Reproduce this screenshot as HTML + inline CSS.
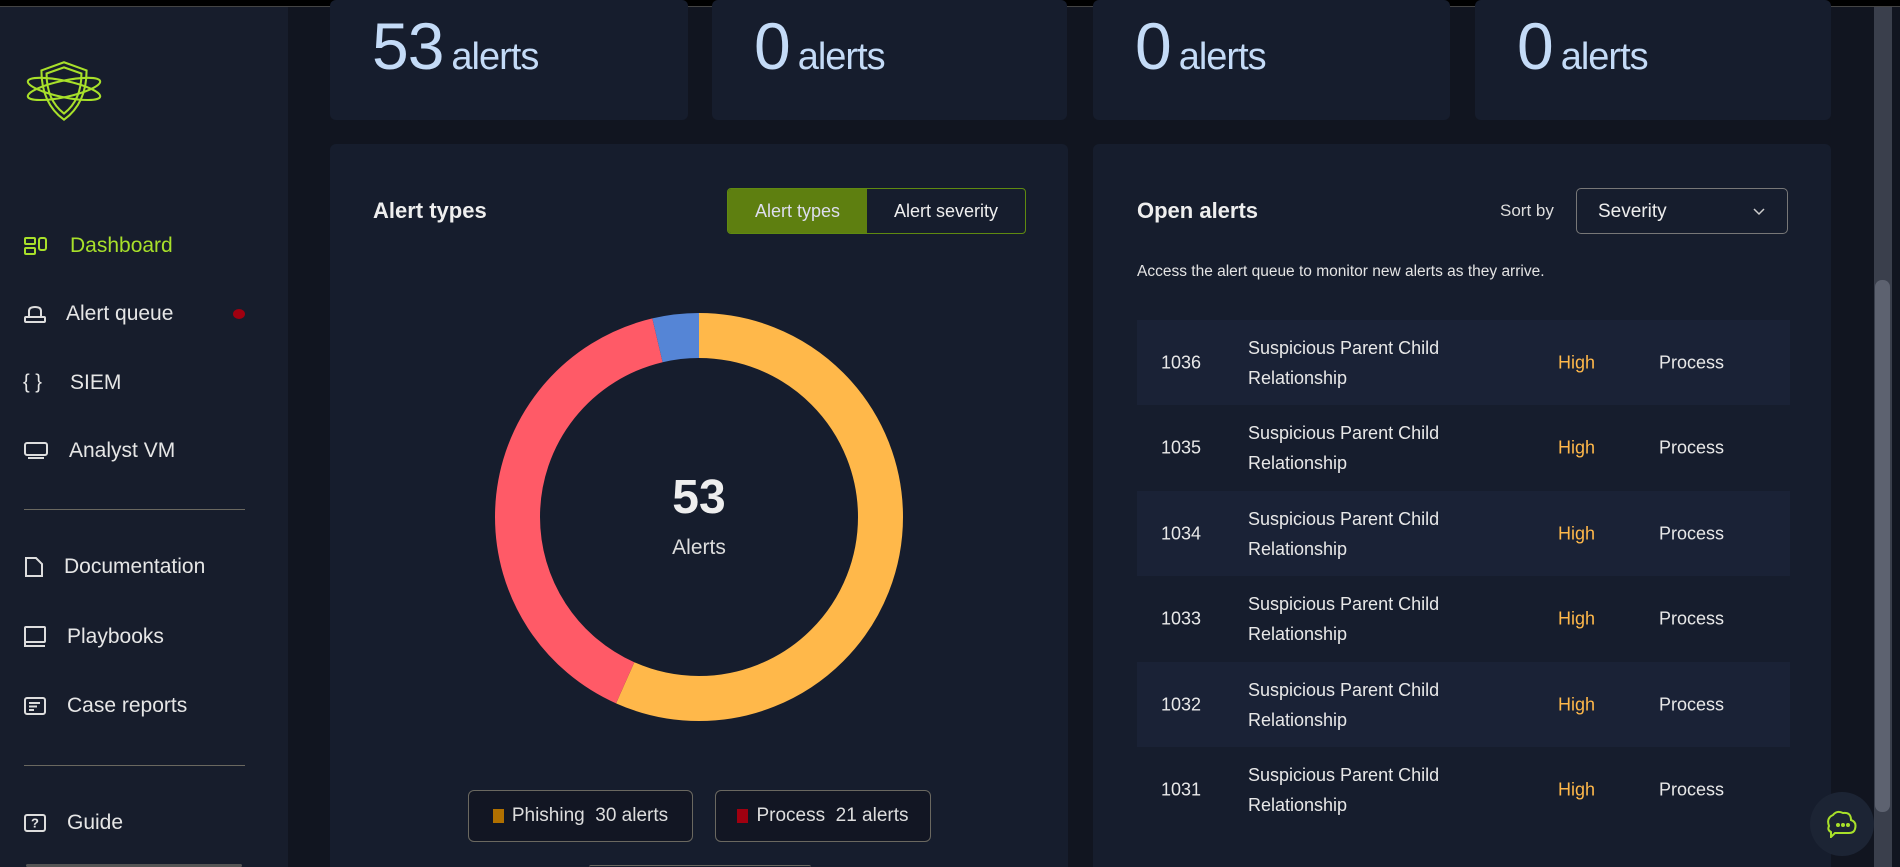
<!DOCTYPE html>
<html style="width:1900px;height:867px;overflow:hidden"><head><meta charset="utf-8"><style>
*{box-sizing:border-box;margin:0;padding:0}
body{width:1900px;height:867px;overflow:hidden;background:#111520;font-family:"Liberation Sans",sans-serif;color:#e8e8e8}
#w{position:relative;width:1900px;height:867px;overflow:hidden}
.top{position:absolute;left:0;top:0;width:1900px;height:7px;background:#000;border-bottom:1px solid #444}
.side{position:absolute;left:0;top:7px;width:288px;height:860px;background:#171d2c}
.nav{position:absolute;left:24px;font-size:21px;color:#e6e6e6}
.nav svg{position:absolute;left:0;top:50%;transform:translateY(-50%)}
.nav span{position:absolute;white-space:nowrap;top:50%;transform:translateY(-50%)}
.div{position:absolute;left:24px;width:221px;height:1px;background:#6a6860}
.card{position:absolute;background:#161d2d;border-radius:6px}
.num{position:absolute;top:8px;left:42px;color:#c4dbf7;white-space:nowrap;letter-spacing:-1px}
.num b{font-size:66px;font-weight:normal}
.num i{font-style:normal;font-size:38px;margin-left:8px}
.row{position:absolute;left:1137px;width:653px;height:85px;font-size:18px}
.row.a{background:#1a2236}
.row div{position:absolute;top:50%;transform:translateY(-50%)}
.legend{position:absolute;height:52px;border:1px solid #6a6860;border-radius:6px;background:#121623;font-size:19px;color:#ddd;display:flex;align-items:center;justify-content:center;gap:8px}
.sq{width:11px;height:14px;display:inline-block}
</style></head><body><div id="w">
<div class="top"></div>
<div class="side">
<svg style="position:absolute;left:25px;top:52px" width="78" height="66" viewBox="0 0 76 62" fill="none" stroke="#a8e02a" stroke-width="2"><ellipse cx="38" cy="28" rx="36" ry="8" transform="rotate(12 38 28)"/><ellipse cx="38" cy="28" rx="36" ry="8" transform="rotate(-12 38 28)"/><path d="M38 2 L60 10 Q60 42 38 58 Q16 42 16 10 Z"/><path d="M38 7 L55 13 Q55 39 38 52 Q21 39 21 13 Z"/></svg>
</div>
<div class="nav" style="top:246px;color:#a8e02a"><svg width="24" height="18" viewBox="0 0 24 18" fill="none" stroke="#a8e02a" stroke-width="2"><rect x="1" y="1" width="10" height="6" rx="1"/><rect x="1" y="11" width="10" height="6" rx="1"/><rect x="15" y="1" width="7" height="12" rx="2"/></svg><span style="left:46px">Dashboard</span></div>
<div class="nav" style="top:314px"><svg width="22" height="18" viewBox="0 0 22 18" fill="none" stroke="#ddd" stroke-width="2"><path d="M5 12 V6 Q5 2 11 2 Q17 2 17 6 V12"/><rect x="1" y="12" width="20" height="5" rx="1"/></svg><span style="left:42px">Alert queue</span></div>
<div style="position:absolute;left:233px;top:309px;width:12px;height:10px;border-radius:50%;background:#a00010"></div>
<div class="nav" style="top:383px"><span style="left:-1px;font-size:20px">{ }</span><span style="left:46px">SIEM</span></div>
<div class="nav" style="top:451px"><svg width="24" height="18" viewBox="0 0 24 18" fill="none" stroke="#ddd" stroke-width="2"><rect x="1" y="1" width="22" height="12" rx="2"/><path d="M4 16 H20"/></svg><span style="left:45px">Analyst VM</span></div>
<div class="div" style="top:509px"></div>
<div class="nav" style="top:567px"><svg width="20" height="22" viewBox="0 0 20 22" fill="none" stroke="#ddd" stroke-width="2"><path d="M2 2 H12 L18 8 V20 H2 Z"/></svg><span style="left:40px">Documentation</span></div>
<div class="nav" style="top:637px"><svg width="22" height="22" viewBox="0 0 22 22" fill="none" stroke="#ddd" stroke-width="2"><rect x="1" y="1" width="20" height="15" rx="1"/><path d="M1 16 V20 H21"/></svg><span style="left:43px">Playbooks</span></div>
<div class="nav" style="top:706px"><svg width="22" height="18" viewBox="0 0 22 18" fill="none" stroke="#ddd" stroke-width="2"><rect x="1" y="1" width="20" height="16" rx="2"/><path d="M5 6 H16 M5 9.5 H13 M5 13 H10"/></svg><span style="left:43px">Case reports</span></div>
<div class="div" style="top:765px"></div>
<div class="nav" style="top:823px"><svg width="22" height="18" viewBox="0 0 22 18" fill="none" stroke="#ddd" stroke-width="2"><rect x="1" y="1" width="20" height="16" rx="2"/></svg><span style="left:7px;font-size:13px;font-weight:bold">?</span><span style="left:43px">Guide</span></div>
<div style="position:absolute;left:26px;top:864px;width:216px;height:3px;background:#555;border-radius:2px"></div>

<div class="card" style="left:330px;top:0;width:358px;height:120px"><div class="num"><b>53</b><i>alerts</i></div></div>
<div class="card" style="left:712px;top:0;width:355px;height:120px"><div class="num"><b>0</b><i>alerts</i></div></div>
<div class="card" style="left:1093px;top:0;width:357px;height:120px"><div class="num"><b>0</b><i>alerts</i></div></div>
<div class="card" style="left:1475px;top:0;width:356px;height:120px"><div class="num"><b>0</b><i>alerts</i></div></div>

<div class="card" style="left:330px;top:144px;width:738px;height:723px;border-radius:6px 6px 0 0"></div>
<div style="position:absolute;left:373px;top:198px;font-size:22px;font-weight:bold;color:#eee">Alert types</div>
<div style="position:absolute;left:727px;top:188px;width:299px;height:46px;border:1px solid #5f8a10;border-radius:4px;overflow:hidden;font-size:18px;display:flex">
<div style="width:139px;background:#5e7f10;color:#dde;display:flex;align-items:center;justify-content:center">Alert types</div>
<div style="flex:1;display:flex;align-items:center;justify-content:center;color:#eee">Alert severity</div></div>
<svg style="position:absolute;left:495px;top:313px" width="408" height="408" viewBox="-204 -204 408 408">
<g fill="none" stroke-width="45" transform="rotate(-90)">
<circle r="181.5" stroke="#ffb84a" stroke-dasharray="646 2000"/>
<circle r="181.5" stroke="#ff5a67" stroke-dasharray="0 646 452 2000"/>
<circle r="181.5" stroke="#5585d6" stroke-dasharray="0 1098 45 2000"/>
</g></svg>
<div style="position:absolute;left:599px;top:470px;width:200px;text-align:center;font-size:48px;font-weight:bold;color:#eee">53</div>
<div style="position:absolute;left:599px;top:536px;width:200px;text-align:center;font-size:21px;color:#ddd">Alerts</div>
<div class="legend" style="left:468px;top:790px;width:225px"><span class="sq" style="background:#b07000"></span>Phishing&nbsp;&nbsp;30 alerts</div>
<div class="legend" style="left:715px;top:790px;width:216px"><span class="sq" style="background:#a00010"></span>Process&nbsp;&nbsp;21 alerts</div>
<div style="position:absolute;left:589px;top:865px;width:222px;height:2px;border-top:1px solid #6a6860;border-radius:6px 6px 0 0"></div>

<div class="card" style="left:1093px;top:144px;width:738px;height:723px;border-radius:6px 6px 0 0"></div>
<div style="position:absolute;left:1137px;top:198px;font-size:22px;font-weight:bold;color:#eee">Open alerts</div>
<div style="position:absolute;left:1500px;top:201px;font-size:17px;color:#ddd">Sort by</div>
<div style="position:absolute;left:1576px;top:188px;width:212px;height:46px;border:1px solid #777;border-radius:5px;font-size:19px;color:#eee;padding:12px 0 0 21px">Severity<svg style="position:absolute;right:22px;top:19px" width="12" height="8" viewBox="0 0 12 8" fill="none" stroke="#ccc" stroke-width="1.5"><path d="M1 1 L6 6 L11 1"/></svg></div>
<div style="position:absolute;left:1137px;top:263px;font-size:15.5px;color:#e4e4e4">Access the alert queue to monitor new alerts as they arrive.</div>

<div class="row a" style="top:320px"><div style="left:24px">1036</div><div style="left:111px;line-height:30px">Suspicious Parent Child<br>Relationship</div><div style="left:421px;color:#ffb84a">High</div><div style="left:522px">Process</div></div>
<div class="row" style="top:405px"><div style="left:24px">1035</div><div style="left:111px;line-height:30px">Suspicious Parent Child<br>Relationship</div><div style="left:421px;color:#ffb84a">High</div><div style="left:522px">Process</div></div>
<div class="row a" style="top:491px"><div style="left:24px">1034</div><div style="left:111px;line-height:30px">Suspicious Parent Child<br>Relationship</div><div style="left:421px;color:#ffb84a">High</div><div style="left:522px">Process</div></div>
<div class="row" style="top:576px"><div style="left:24px">1033</div><div style="left:111px;line-height:30px">Suspicious Parent Child<br>Relationship</div><div style="left:421px;color:#ffb84a">High</div><div style="left:522px">Process</div></div>
<div class="row a" style="top:662px"><div style="left:24px">1032</div><div style="left:111px;line-height:30px">Suspicious Parent Child<br>Relationship</div><div style="left:421px;color:#ffb84a">High</div><div style="left:522px">Process</div></div>
<div class="row" style="top:747px"><div style="left:24px">1031</div><div style="left:111px;line-height:30px">Suspicious Parent Child<br>Relationship</div><div style="left:421px;color:#ffb84a">High</div><div style="left:522px">Process</div></div>

<div style="position:absolute;left:1874px;top:7px;width:18px;height:860px;background:#3a3f4c"></div>
<div style="position:absolute;left:1875px;top:280px;width:15px;height:532px;background:#5d6270;border-radius:7px"></div>
<div style="position:absolute;left:1810px;top:792px;width:64px;height:64px;border-radius:50%;background:#1c2434"></div>
<svg style="position:absolute;left:1825px;top:810px" width="34" height="28" viewBox="0 0 34 28" fill="none" stroke="#a8e02a" stroke-width="2"><path d="M4 16 Q1 8 8 5 Q12 0 18 3 Q26 2 26 10 Q32 12 30 19 Q29 23 24 23 H10 L6 27 V22 Q2 20 4 16 Z"/><circle cx="13" cy="15" r="1"/><circle cx="18" cy="15" r="1"/><circle cx="23" cy="15" r="1"/></svg>
</div></body></html>
